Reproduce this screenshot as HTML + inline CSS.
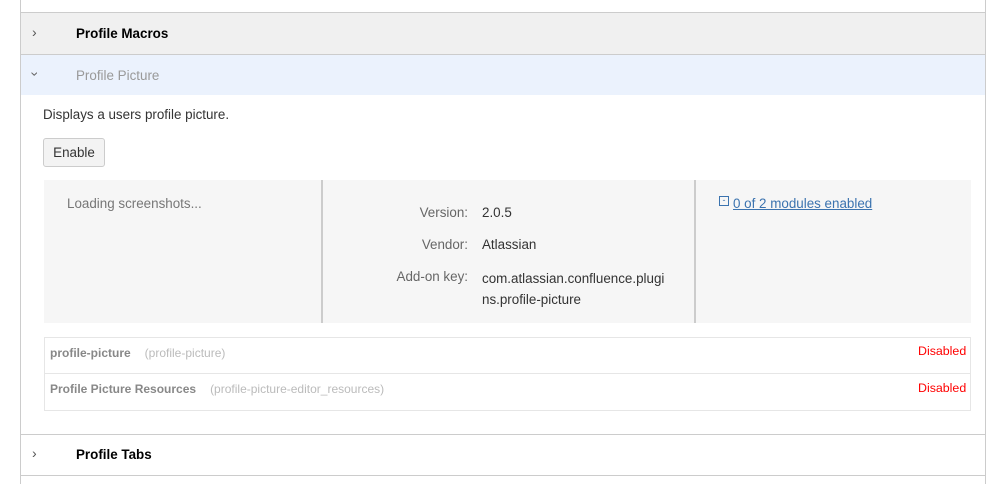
<html><head><style>
body{margin:0;width:998px;height:484px;background:#fff;font-family:"Liberation Sans",Arial,sans-serif;font-size:13.4px;color:#333;position:relative;overflow:hidden}
.a{position:absolute}
</style></head><body>
<div class="a" style="left:20px;top:0;width:964px;height:484px;border-left:1px solid #ccc;border-right:1px solid #ccc"></div>
<div class="a" style="left:21px;top:12px;width:964px;height:41px;background:#f0f0f0;border-top:1px solid #ccc;border-bottom:1px solid #ccc"></div>
<div class="a" style="left:32px;top:24px;font-size:14px;color:#555">›</div>
<div class="a" style="left:76px;top:26px;font-weight:bold;color:#000">Profile Macros</div>
<div class="a" style="left:21px;top:55px;width:964px;height:40px;background:#ebf2fd"></div>
<div class="a" style="left:33px;top:66px;font-size:14px;color:#666;transform:rotate(90deg)">›</div>
<div class="a" style="left:76px;top:68px;color:#999">Profile Picture</div>
<div class="a" style="left:43px;top:107px">Displays a users profile picture.</div>
<div class="a" style="left:43px;top:138px;width:60px;height:27px;border:1px solid #ccc;border-radius:3px;background:#f3f3f3;text-align:center;line-height:27px">Enable</div>
<div class="a" style="left:44px;top:180px;width:927px;height:143px;background:#f6f6f6"></div>
<div class="a" style="left:321px;top:180px;width:2px;height:143px;background:#ccc"></div>
<div class="a" style="left:694px;top:180px;width:2px;height:143px;background:#ccc"></div>
<div class="a" style="left:67px;top:196px;color:#777">Loading screenshots...</div>
<div class="a" style="left:340px;top:197px;width:128px;text-align:right;color:#666;line-height:32px">Version:<br>Vendor:<br>Add-on key:</div>
<div class="a" style="left:482px;top:197px;line-height:32px">2.0.5<br>Atlassian</div>
<div class="a" style="left:482px;top:268px;width:190px;line-height:21px">com.atlassian.confluence.plugi<br>ns.profile-picture</div>
<div class="a" style="left:719px;top:196px;width:8px;height:8px;border:1px solid #3b73af;font-size:9px;line-height:6px;text-align:center;color:#3b73af">-</div>
<div class="a" style="left:733px;top:196px;color:#3b73af;text-decoration:underline">0 of 2 modules enabled</div>
<div class="a" style="left:44px;top:337px;width:925px;height:72px;border:1px solid #e6e6e6"></div>
<div class="a" style="left:45px;top:373px;width:925px;height:1px;background:#e6e6e6"></div>
<div class="a" style="left:50px;top:346px;font-size:12px;color:#888"><b>profile-picture</b><span style="color:#bbb;margin-left:14px">(profile-picture)</span></div>
<div class="a" style="left:50px;top:382px;font-size:12px;color:#888"><b>Profile Picture Resources</b><span style="color:#bbb;margin-left:14px">(profile-picture-editor_resources)</span></div>
<div class="a" style="left:918px;top:344px;font-size:12.4px;color:#f00">Disabled</div>
<div class="a" style="left:918px;top:381px;font-size:12.4px;color:#f00">Disabled</div>
<div class="a" style="left:21px;top:434px;width:964px;height:40px;border-top:1px solid #ccc;border-bottom:1px solid #ccc"></div>
<div class="a" style="left:32px;top:445px;font-size:14px;color:#555">›</div>
<div class="a" style="left:76px;top:447px;font-weight:bold;color:#000">Profile Tabs</div>
</body></html>
